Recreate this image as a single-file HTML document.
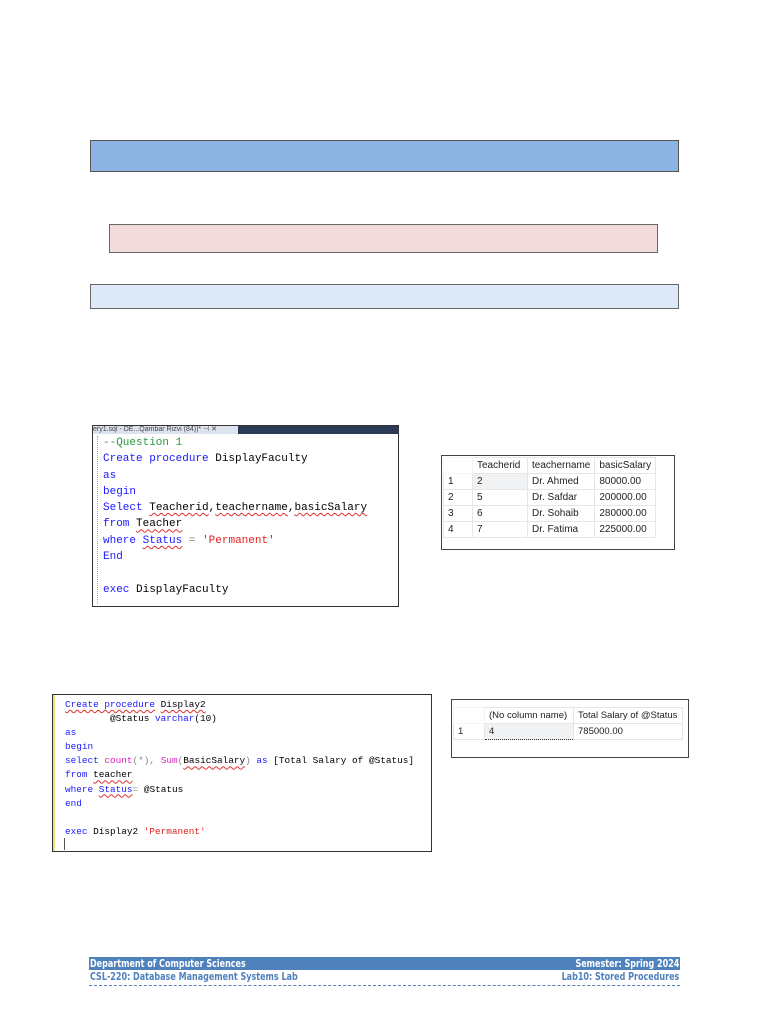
<!DOCTYPE html>
<html><head><meta charset="utf-8"><style>
body{margin:0;width:768px;height:1024px;background:#fff;position:relative;font-family:"Liberation Sans",sans-serif;overflow:hidden}
.a{position:absolute;box-sizing:border-box}
.code{font-family:"Liberation Mono","DejaVu Sans Mono",monospace;white-space:pre;position:absolute}
.k{color:#1a1aff}.r{color:#e0201e}.g{color:#2a9a3a}.gr{color:#888}
.u{text-decoration:underline wavy #e03030;text-decoration-thickness:1px;text-underline-offset:2px}
table{border-collapse:collapse;font-size:10px;color:#222;white-space:nowrap}
td{border:1px solid #e6e6e6;padding:0 4px;height:15px}
.ft{font-family:'DejaVu Sans','Liberation Sans',sans-serif;font-weight:bold;font-size:11px;display:inline-block;transform:scaleX(0.73)}
</style></head><body>
<div class="a" style="left:90px;top:140px;width:589px;height:32px;background:#8db3e2;border:1px solid #555"></div>
<div class="a" style="left:109px;top:224px;width:549px;height:29px;background:#f2dcdb;border:1px solid #666"></div>
<div class="a" style="left:90px;top:284px;width:589px;height:25px;background:#dde9f6;border:1px solid #666"></div>

<div class="a" style="left:92px;top:425px;width:307px;height:182px;border:1px solid #333;background:#fff"></div>
<div class="a" style="left:93px;top:426px;width:145px;height:8px;background:#dce3ee;font-size:7px;line-height:8px;color:#444;overflow:hidden;white-space:nowrap">ery1.sql - DE...Qambar Rizvi (84))* ⊣ ✕</div>
<div class="a" style="left:238px;top:426px;width:160px;height:8px;background:#2b3a57"></div>
<div class="a" style="left:97px;top:436px;width:2px;height:168px;border-left:1px dotted #aaa"></div>
<div class="code" style="left:103px;top:435px;font-size:11px;line-height:16.3px"><span class="g">--Question 1</span>
<span class="k">Create procedure</span> DisplayFaculty
<span class="k">as</span>
<span class="k">begin</span>
<span class="k">Select</span> <span class="u">Teacherid</span>,<span class="u">teachername</span>,<span class="u">basicSalary</span>
<span class="k">from</span> <span class="u">Teacher</span>
<span class="k">where</span> <span class="k u">Status</span> <span class="gr">=</span> <span class="r">'Permanent'</span>
<span class="k">End</span>

<span class="k">exec</span> DisplayFaculty</div>

<div class="a" style="left:441px;top:455px;width:234px;height:95px;border:1px solid #444"></div>
<table class="a" style="left:443px;top:457px">
<tr><td style="width:20px;border-color:#f4f4f4"></td><td style="width:46px">Teacherid</td><td style="width:58px">teachername</td><td style="width:50px">basicSalary</td></tr>
<tr><td>1</td><td style="border:1px dotted #333;background:#f0f2f4">2</td><td>Dr. Ahmed</td><td>80000.00</td></tr>
<tr><td>2</td><td>5</td><td>Dr. Safdar</td><td>200000.00</td></tr>
<tr><td>3</td><td>6</td><td>Dr. Sohaib</td><td>280000.00</td></tr>
<tr><td>4</td><td>7</td><td>Dr. Fatima</td><td>225000.00</td></tr>
</table>

<div class="a" style="left:52px;top:694px;width:380px;height:158px;border:1px solid #333;background:#fff"></div>
<div class="a" style="left:53px;top:695px;width:2px;height:156px;background:#f2e07a"></div>
<div class="a" style="left:64px;top:838px;width:1px;height:12px;background:#555"></div>
<div class="code" style="left:65px;top:698px;font-size:9.4px;line-height:14.1px"><span class="k u">Create procedure</span> <span class="u">Display2</span>
        @Status <span class="k">varchar</span>(10)
<span class="k">as</span>
<span class="k">begin</span>
<span class="k">select</span> <span style="color:#e020c0">count</span><span class="gr">(*),</span> <span style="color:#e020c0">Sum</span><span class="gr">(</span><span class="u">BasicSalary</span><span class="gr">)</span> <span class="k">as</span> [Total Salary of @Status]
<span class="k">from</span> <span class="u">teacher</span>
<span class="k">where</span> <span class="k u">Status</span><span class="gr">=</span> @Status
<span class="k">end</span>

<span class="k">exec</span> Display2 <span class="r">'Permanent'</span></div>

<div class="a" style="left:451px;top:699px;width:238px;height:59px;border:1px solid #444"></div>
<table class="a" style="left:453px;top:707px;font-size:9.5px">
<tr><td style="width:22px;border-color:#f4f4f4"></td><td style="width:80px">(No column name)</td><td style="width:100px">Total Salary of @Status</td></tr>
<tr><td>1</td><td style="border:1px dotted #333;background:#f0f2f4">4</td><td>785000.00</td></tr>
</table>

<div class="a" style="left:89px;top:957px;width:591px;height:13px;background:#4f81bd;color:#fff;line-height:13px;padding:0 1px">
<span class="ft" style="float:left;transform-origin:left">Department of Computer Sciences</span><span class="ft" style="float:right;transform-origin:right">Semester: Spring 2024</span></div>
<div class="a" style="left:89px;top:970px;width:591px;height:16px;color:#4f81bd;line-height:14px;padding:0 1px;border-bottom:1px dashed #4f81bd">
<span class="ft" style="float:left;transform-origin:left">CSL-220: Database Management Systems Lab</span><span class="ft" style="float:right;transform-origin:right">Lab10: Stored Procedures</span></div>
</body></html>
